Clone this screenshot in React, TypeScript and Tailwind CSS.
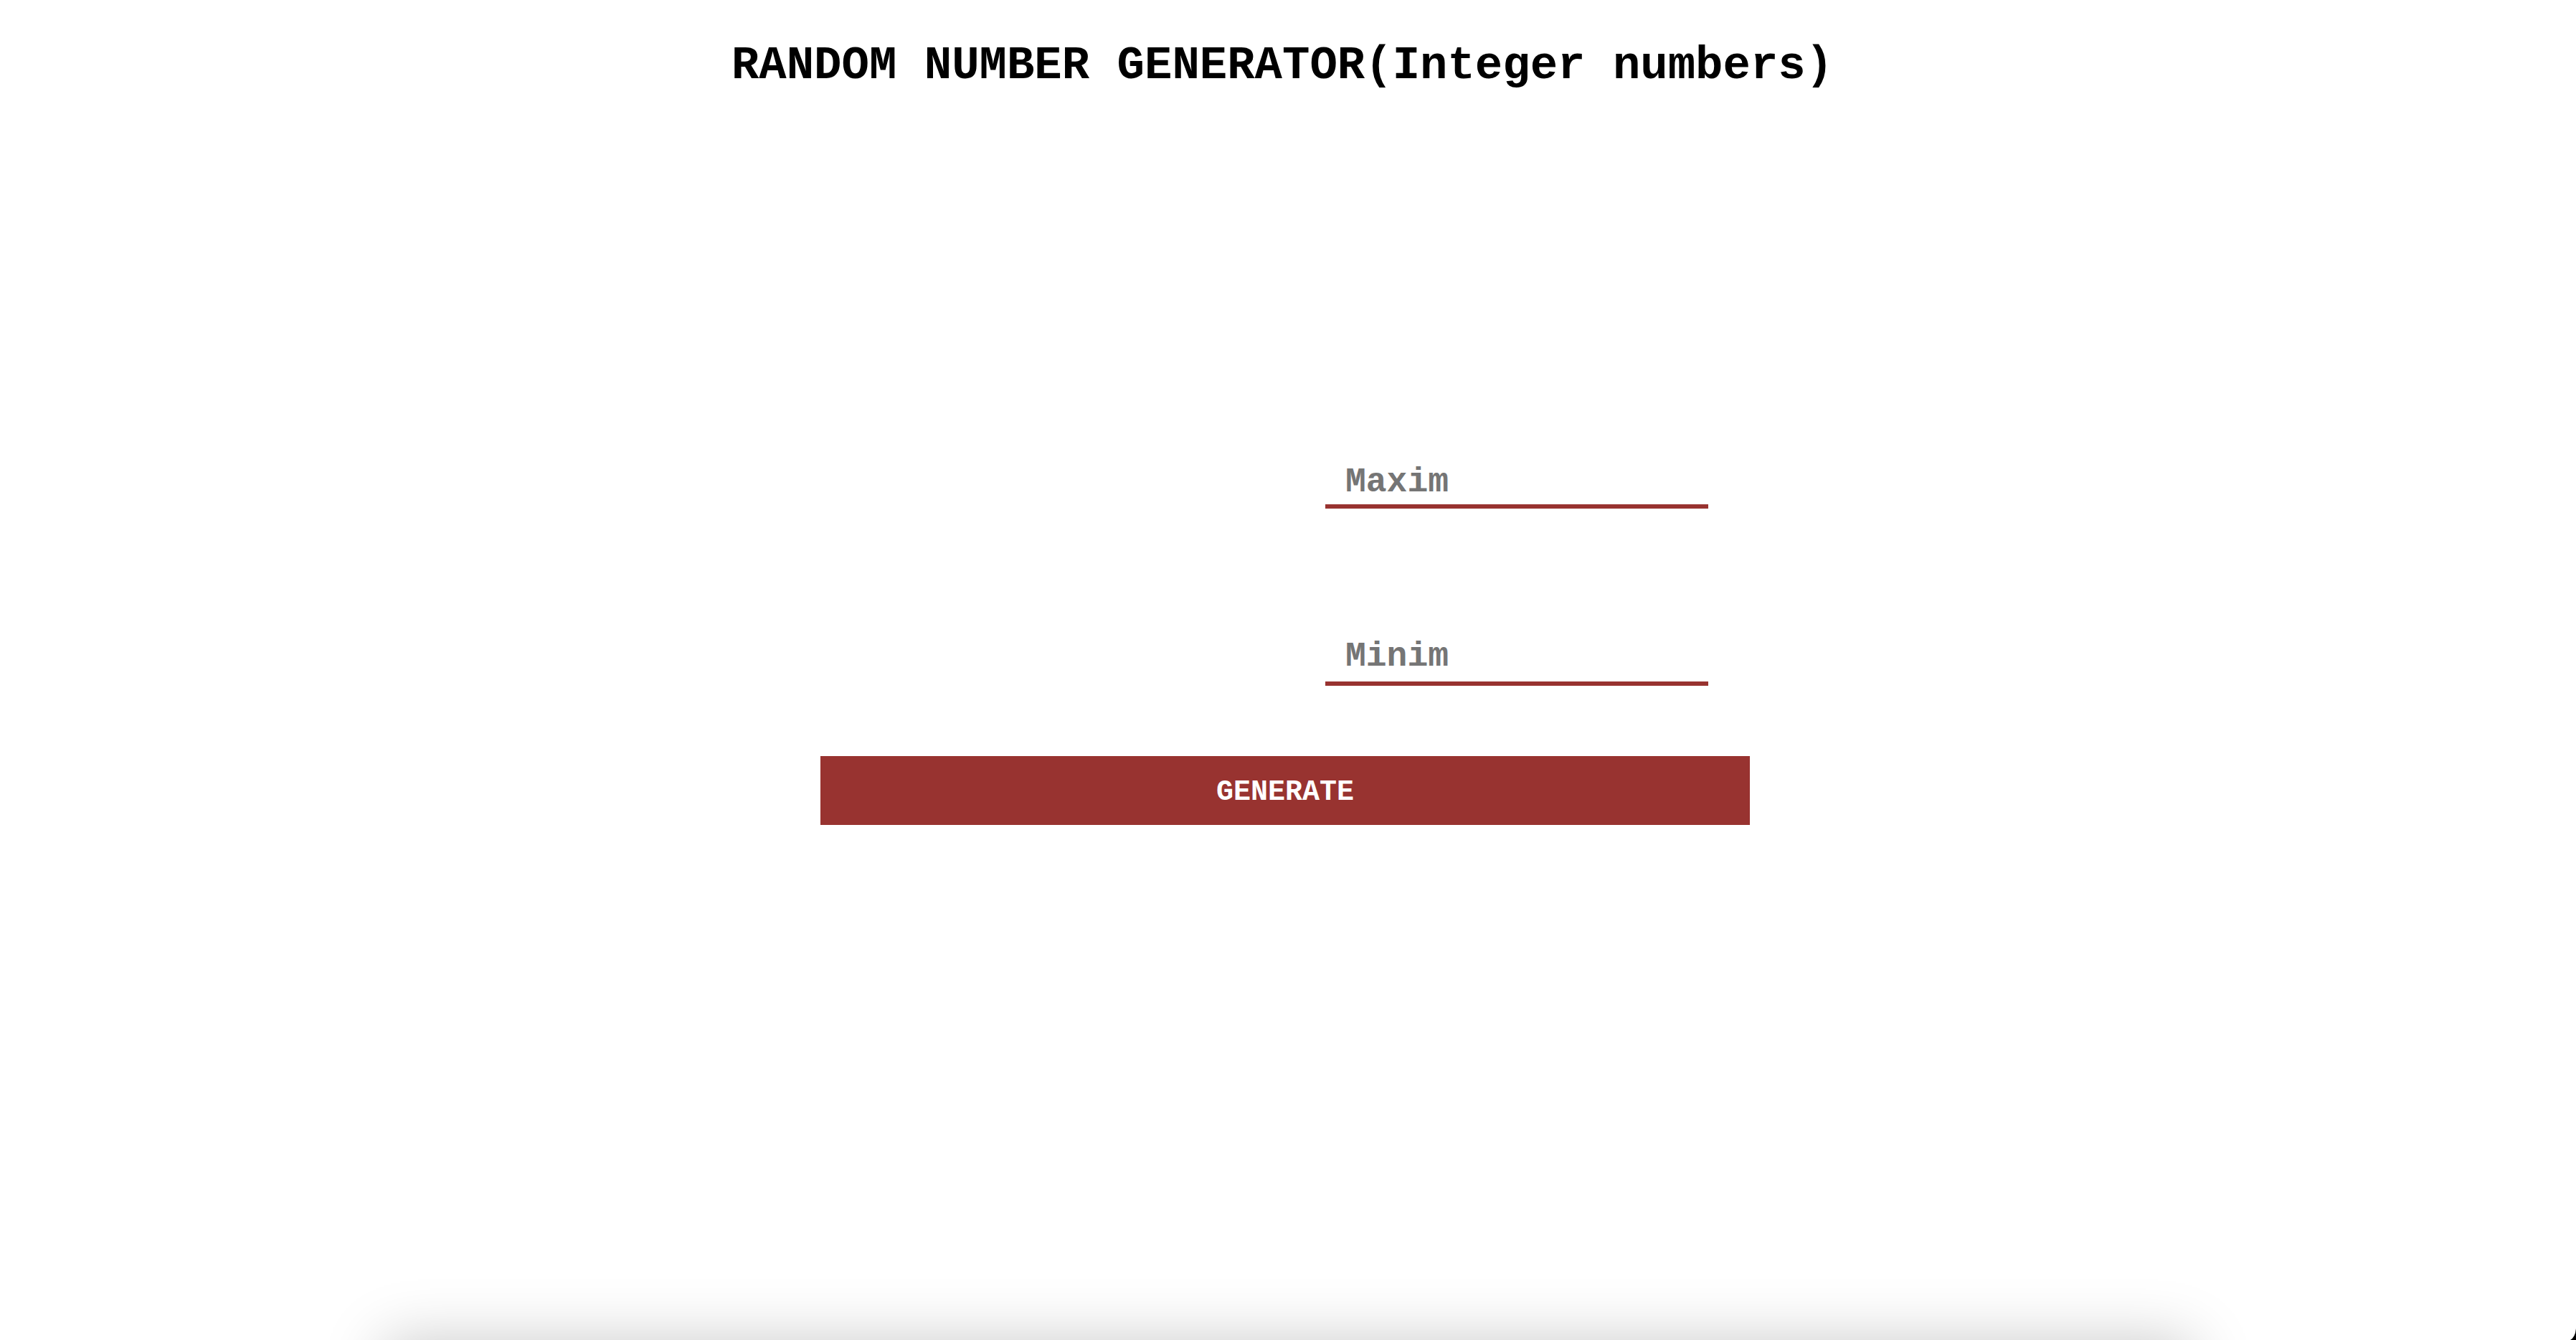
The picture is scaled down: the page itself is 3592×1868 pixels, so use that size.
import React from 'react';

export default function App() {
    return (
        <div className="bg-white min-h-screen font-['Liberation_Mono','Courier_New',monospace] text-black">
            {/* Generator section */}
            <section className="h-[1870px] flex flex-col">
                <h1 className="pt-[56px] pr-[16px] text-center text-[64px] leading-[72px] font-bold">
                    RANDOM NUMBER GENERATOR(Integer numbers)
                </h1>

                <div className="flex justify-center pr-[8px] pt-[505px]">
                    <form className="w-[1296px] flex flex-col" onSubmit={(e) => e.preventDefault()}>
                        <div className="pl-[704px]">
                            <input
                                type="number"
                                placeholder="Maxim"
                                className="w-[534px] pl-[28px] pt-[12px] pb-[4px] text-[48px] leading-[54px] font-bold border-b-[6px] border-[#983330] outline-none placeholder:text-[#757575]"
                            />
                        </div>
                        <div className="pl-[704px] pt-[171px]">
                            <input
                                type="number"
                                placeholder="Minim"
                                className="w-[534px] pl-[28px] py-[8px] text-[48px] leading-[54px] font-bold border-b-[6px] border-[#983330] outline-none placeholder:text-[#757575]"
                            />
                        </div>
                        <button
                            type="submit"
                            className="mt-[98px] h-[96px] w-full pt-[6px] bg-[#983330] text-white text-[40px] font-bold"
                        >
                            GENERATE
                        </button>
                    </form>
                </div>
            </section>

            {/* Result card (below the fold) */}
            <section className="w-[2520px] mx-auto h-[600px] bg-white shadow-[0_0_80px_rgba(0,0,0,0.22)]"></section>

            {/* window corner */}
            <svg className="fixed right-0 bottom-0" width="8" height="16" viewBox="0 0 8 16">
                <path d="M8 0 Q7 12 0 16 L8 16 Z" fill="#000" />
            </svg>
        </div>
    );
}
